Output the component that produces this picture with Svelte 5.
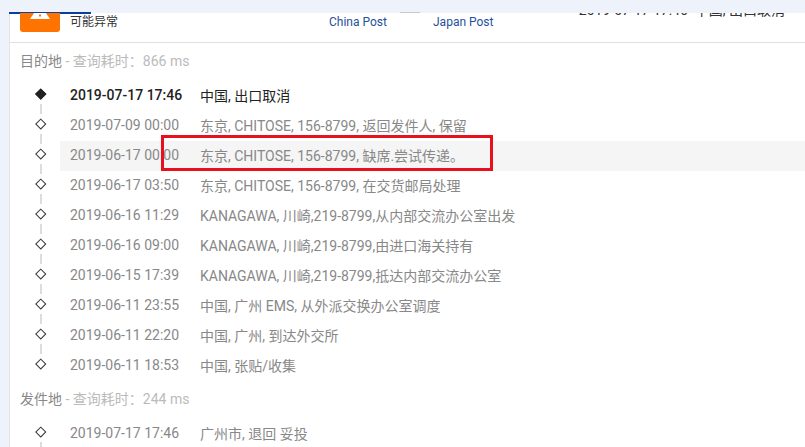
<script>
  const dest = [
    ['2019-07-09 00:00', '东京, CHITOSE, 156-8799, 返回发件人, 保留'],
    ['2019-06-17 00:00', '东京, CHITOSE, 156-8799, 缺席.尝试传递。', true],
    ['2019-06-17 03:50', '东京, CHITOSE, 156-8799, 在交货邮局处理'],
    ['2019-06-16 11:29', 'KANAGAWA, 川崎,219-8799,从内部交流办公室出发'],
    ['2019-06-16 09:00', 'KANAGAWA, 川崎,219-8799,由进口海关持有'],
    ['2019-06-15 17:39', 'KANAGAWA, 川崎,219-8799,抵达内部交流办公室'],
    ['2019-06-11 23:55', '中国, 广州 EMS, 从外派交换办公室调度'],
    ['2019-06-11 22:20', '中国, 广州, 到达外交所'],
    ['2019-06-11 18:53', '中国, 张贴/收集']
  ];
</script>

<div class="page">
  <div class="band"></div>
  <div class="accent"></div>
  <main class="card">
    <header class="head">
      <div class="status">
        <div class="badge"><svg width="40" height="8" viewBox="0 0 40 8"><path d="M14 0 H26 L30 6 H10 Z" fill="#fff"/><rect x="19" y="1.5" width="2" height="2" fill="#ff7300"/></svg></div>
        <span class="status-text">可能异常</span>
      </div>
      <div class="carrier china">China Post</div>
      <div class="carrier japan">Japan Post</div>
      <div class="latest">2019-07-17 17:46&nbsp; 中国, 出口取消</div>
    </header>

    <h3 class="title">目的地<span>&nbsp;- 查询耗时：866 ms</span></h3>
    <ul class="list">
      <li class="row first strong"><i class="dot solid"></i><time>2019-07-17 17:46</time><p>中国, 出口取消</p></li>
      {#each dest as [t, d, hl]}
        <li class="row" class:hl><i class="dot"></i><time>{t}</time><p>{d}</p></li>
      {/each}
    </ul>

    <h3 class="title">发件地<span>&nbsp;- 查询耗时：244 ms</span></h3>
    <ul class="list">
      <li class="row first"><i class="dot"></i><time>2019-07-17 17:46</time><p>广州市, 退回 妥投</p></li>
      <li class="row"></li>
    </ul>
  </main>
  <div class="mark"></div>
  <div class="tick"></div>
</div>

<style>
  :global(body) { margin: 0; background: #fff; }
  .page {
    position: relative;
    width: 805px;
    height: 447px;
    overflow: hidden;
    background: #eef2fb;
    font-family: Roboto, "Noto Sans CJK SC", sans-serif;
    font-size: 14px;
    color: #888;
  }
  .band { height: 13px; }
  .accent { position: absolute; left: 9px; top: 12px; width: 82px; height: 2px; background: #0b3f9e; }
  .tick { position: absolute; left: 400px; top: 12px; width: 20px; height: 1px; background: #c8c8c8; }
  .card {
    margin-left: 9px;
    height: 434px;
    background: #fff;
    border-left: 1px solid #e3e3e3;
    overflow: hidden;
  }
  .head {
    position: relative;
    height: 29px;
    border-bottom: 1px solid #e0e0e0;
  }
  .status { display: flex; align-items: flex-start; padding-left: 10px; }
  .badge {
    width: 40px;
    height: 19px;
    background: #ff7300;
    border-radius: 0 0 3px 3px;
    display: flex;
  }
  .badge svg { display: block; }
  .status-text { margin-left: 10px; margin-top: 1px; font-size: 12px; line-height: 16px; color: #333; }
  .carrier { position: absolute; top: 1px; font-size: 12px; line-height: 16px; color: #1f4f9e; }
  .china { left: 319px; }
  .japan { left: 423px; }
  .latest { position: absolute; right: 20px; top: -12px; font-size: 14px; line-height: 18px; color: #333; white-space: nowrap; }
  .title {
    box-sizing: border-box;
    height: 38px;
    margin: 0;
    padding: 9px 0 0 10px;
    font-size: 14px;
    font-weight: 400;
    line-height: 18px;
    color: #888;
  }
  .title span { color: #bbb; }
  .list { list-style: none; margin: 0; padding: 0; }
  .row {
    position: relative;
    box-sizing: border-box;
    display: flex;
    align-items: center;
    height: 30px;
    margin-left: 50px;
    padding: 0 0 2px 10px;
  }
  .row::before {
    content: '';
    position: absolute;
    left: -20px;
    top: -7px;
    width: 2px;
    height: 10px;
    background: #dcdcdc;
  }
  .row.first::before { display: none; }
  .strong { color: #222; font-weight: 500; }
  .strong p { font-weight: 400; }
  .hl { background: #f5f5f5; }
  .dot {
    position: absolute;
    left: -23px;
    top: 8.75px;
    width: 5.5px;
    height: 5.5px;
    border: 1.5px solid #333;
    background: #fff;
    transform: rotate(45deg);
  }
  .dot.solid { background: #222; border-color: #222; }
  time { width: 130px; flex: none; }
  p { margin: 0; white-space: nowrap; }
  .mark {
    position: absolute;
    left: 161px;
    top: 135px;
    width: 326px;
    height: 30px;
    border: 3px solid #e8101c;
  }
</style>
